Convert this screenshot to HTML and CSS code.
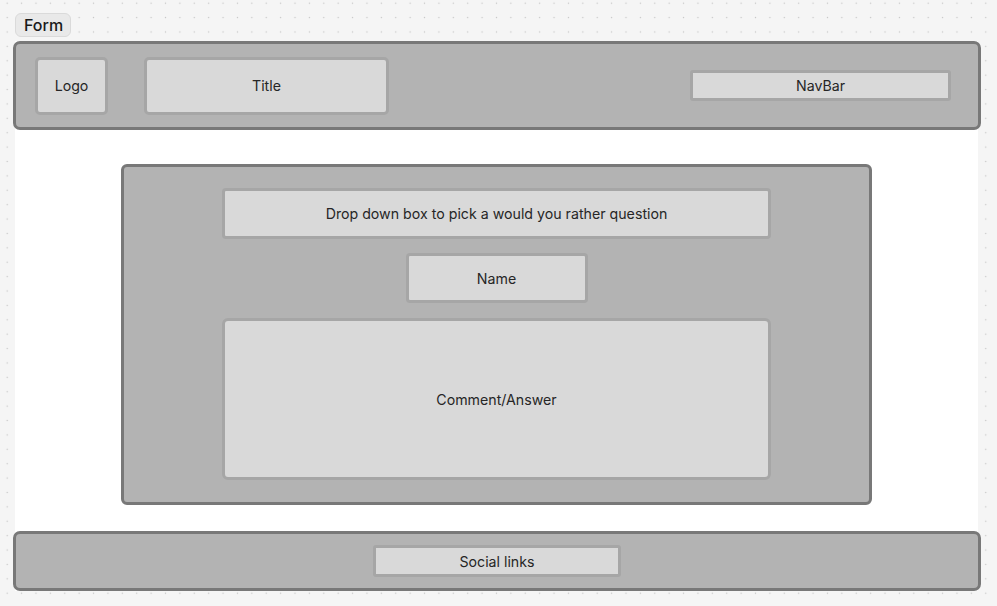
FILE: index.html
```html
<!DOCTYPE html>
<html>
<head>
<meta charset="utf-8">
<link rel="stylesheet" href="styles.css">
</head>
<body>
<div class="canvas">
  <div class="frame-label">Form</div>
  <div class="frame">
    <header class="header">
      <div class="box logo">Logo</div>
      <div class="box title">Title</div>
      <div class="spacer"></div>
      <div class="box navbar">NavBar</div>
    </header>
    <main class="main">
      <section class="panel">
        <div class="box dropdown">Drop down box to pick a would you rather question</div>
        <div class="box name">Name</div>
        <div class="box comment">Comment/Answer</div>
      </section>
    </main>
    <footer class="footer">
      <div class="box social">Social links</div>
    </footer>
  </div>
</div>
</body>
</html>
```
FILE: styles.css
```css
* { box-sizing: border-box; }
html, body {
  margin: 0;
  height: 100%;
}
body {
  background-color: #f5f5f5;
  background-image: radial-gradient(circle, #c4c4c4 0.7px, transparent 1px);
  background-size: 14.4px 14.4px;
  background-position: 0px -4px;
  font-family: Inter, "Noto Sans", sans-serif;
  color: #2b2b2b;
  overflow: hidden;
}
.canvas {
  padding: 13px 0 0 13px;
  width: 981px;
}
.frame-label {
  display: inline-flex;
  align-items: center;
  margin-left: 2px;
  height: 24px;
  padding: 0 7px 0 8px;
  background: #e9e9e9;
  border: 1px solid #dadada;
  border-radius: 6px;
  font-size: 16px;
  font-weight: 500;
  color: #1a1a1a;
}
.frame {
  margin: 4px 3px 0 2px;
  background: #ffffff;
  display: flex;
  flex-direction: column;
}
.header {
  margin: 0 -3px 0 -2px;
  height: 89px;
  background: #b3b3b3;
  border: 3px solid #787878;
  border-radius: 7px;
  display: flex;
  align-items: center;
  padding: 0 27px 0 19px;
}
.box {
  background: #d9d9d9;
  border: 3px solid #a6a6a6;
  border-radius: 5px;
  display: flex;
  align-items: center;
  justify-content: center;
  font-size: 14.2px;
  color: #262626;
}
.logo { width: 73px; height: 58px; }
.title { width: 245px; height: 58px; margin-left: 36px; }
.spacer { flex: 1; }
.navbar { width: 261px; height: 31px; border-radius: 3px; }
.main {
  padding: 34px 0 26px;
  display: flex;
  justify-content: center;
}
.panel {
  width: 751px;
  height: 341px;
  background: #b3b3b3;
  border: 3px solid #787878;
  border-radius: 6px;
  display: flex;
  flex-direction: column;
  align-items: center;
  padding-top: 21px;
}
.dropdown { width: 549px; height: 51px; border-radius: 4px; }
.name { width: 182px; height: 50px; margin-top: 14px; border-radius: 4px; }
.comment { width: 549px; height: 162px; margin-top: 15px; border-radius: 6px; }
.footer {
  margin: 0 -3px 0 -2px;
  height: 60px;
  background: #b3b3b3;
  border: 3px solid #787878;
  border-radius: 7px;
  display: flex;
  align-items: center;
  justify-content: center;
}
.social { width: 248px; height: 32px; border-radius: 3px; }
```
